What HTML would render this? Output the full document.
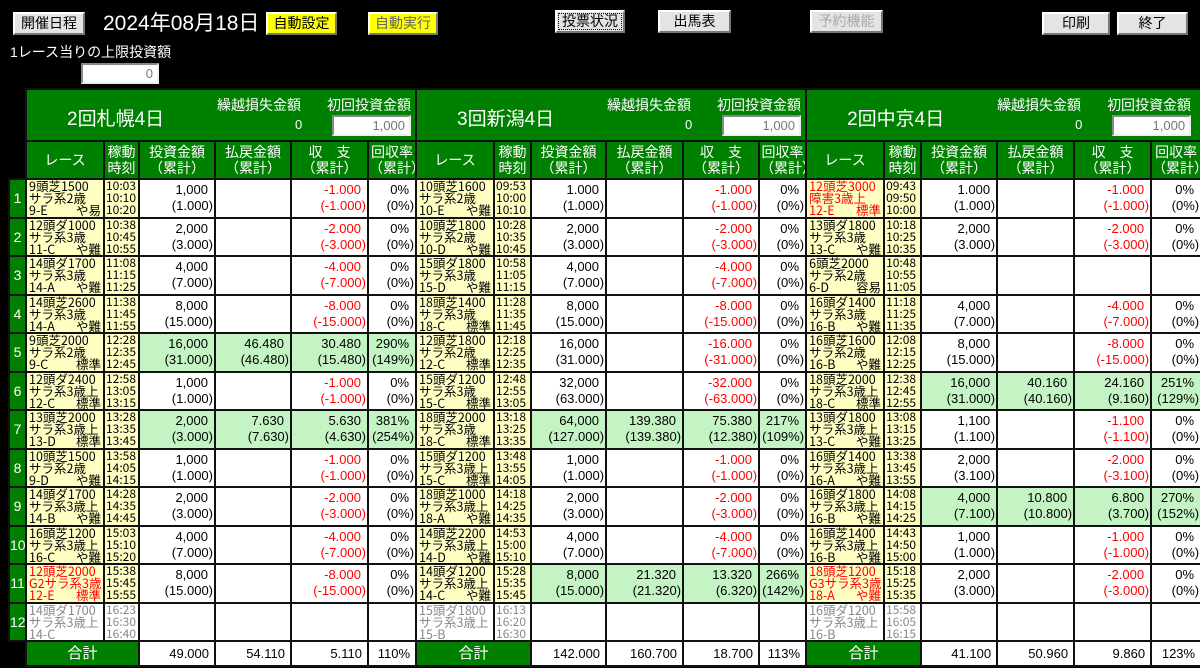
<!DOCTYPE html>
<html><head><meta charset="utf-8">
<style>
*{box-sizing:border-box}
body{margin:0;background:#000;width:1200px;height:668px;overflow:hidden;position:relative;font-family:"Liberation Sans","Noto Sans CJK JP",sans-serif;color:#000}
.btn{position:absolute;height:23px;background:#e4e4e4;border:2px solid;border-color:#fff #777 #777 #fff;font-size:14px;text-align:center;line-height:19px;color:#000}
.yel{background:#ffff00}
.inp{position:absolute;background:#fff;border:2px solid;border-color:#888 #eee #eee #888;text-align:right;font-size:13px;color:#777;padding-right:4px;line-height:17px}
#date{position:absolute;left:103px;top:10px;color:#fff;font-size:21px;line-height:28px}
#lim{position:absolute;left:10px;top:43px;color:#fff;font-size:14px;line-height:18px}
table{position:absolute;left:8px;top:88px;border-collapse:collapse;table-layout:fixed;width:1192px}
td{padding:0;border:2px solid #111;overflow:hidden;white-space:nowrap}
.hd td{background:#008000;color:#fff;font-size:14px;text-align:center;line-height:16px;height:38px}
.ven td.vc{background:#008000;height:52px;position:relative;border-bottom:2px solid #111}
.ven td.bl,.tot td.bl,.hd td.bl{background:#000;border:none}
.ttl{position:absolute;left:40px;top:14px;color:#fff;font-size:19px}
.kl{position:absolute;left:190px;top:5px;color:#fff;font-size:14px}
.k0{position:absolute;left:268px;top:27px;color:#fff;font-size:13px}
.sl{position:absolute;left:300px;top:5px;color:#fff;font-size:14px}
.ven .inp{left:305px;top:25px;width:79px;height:21px}
tr.d td{height:38.4px}
.no{background:#008000;color:#fff;text-align:center;font-size:14px;line-height:14px}
.n,.t{background:#ffffc4;vertical-align:middle;padding-left:2px}
.n div,.t div{font-family:"Noto Sans CJK JP",sans-serif;font-size:12.5px;line-height:12.2px;height:36.5px;overflow:hidden}
.n s{float:right;text-decoration:none;padding-right:2px}
.t{padding-left:1px}
.t div{font-size:12px}
.v{background:#fff;text-align:right;font-size:13px;line-height:16px;vertical-align:middle}
.v span{display:block}
.v span:first-child{padding-right:6px}
.v span:last-child{padding-right:1px}
.r{color:#f00}
.x .n,.x .t{background:#fff;color:#888}
.tot td{height:25px;line-height:18px}
.tot .sum{background:#008000;color:#fff;text-align:center;font-size:15px}
.tot .v{padding-right:5px}
</style></head><body>
<div class="btn" style="left:13px;top:12px;width:72px">開催日程</div>
<div id="date">2024年08月18日</div>
<div class="btn yel" style="left:266px;top:12px;width:71px">自動設定</div>
<div class="btn yel" style="left:368px;top:12px;width:70px;color:#666">自動実行</div>
<div class="btn" style="left:555px;top:10px;width:70px;outline:1px dotted #000;outline-offset:-4px">投票状況</div>
<div class="btn" style="left:658px;top:10px;width:73px">出馬表</div>
<div class="btn" style="left:810px;top:10px;width:73px;color:#aaa">予約機能</div>
<div class="btn" style="left:1042px;top:12px;width:68px">印刷</div>
<div class="btn" style="left:1117px;top:12px;width:71px">終了</div>
<div id="lim">1レース当りの上限投資額</div>
<div class="inp" style="left:81px;top:63px;width:78px;height:21px">0</div>

<table>
<colgroup><col style="width:17px">
<col style="width:78px"><col style="width:35px"><col style="width:76px"><col style="width:76px"><col style="width:77px"><col style="width:48px">
<col style="width:78px"><col style="width:37px"><col style="width:75px"><col style="width:77px"><col style="width:76px"><col style="width:47px">
<col style="width:78px"><col style="width:37px"><col style="width:76px"><col style="width:77px"><col style="width:77px"><col style="width:50px">
</colgroup>
<tr class="ven"><td class="bl"></td>
<td class="vc" colspan="6"><div class="ttl">2回札幌4日</div><div class="kl">繰越損失金額</div><div class="k0">0</div><div class="sl">初回投資金額</div><div class="inp">1,000</div></td>
<td class="vc" colspan="6"><div class="ttl">3回新潟4日</div><div class="kl">繰越損失金額</div><div class="k0">0</div><div class="sl">初回投資金額</div><div class="inp">1,000</div></td>
<td class="vc" colspan="6"><div class="ttl">2回中京4日</div><div class="kl">繰越損失金額</div><div class="k0">0</div><div class="sl">初回投資金額</div><div class="inp">1,000</div></td>
</tr>
<tr class="hd"><td class="bl"></td>
<td>レース</td><td>稼動<br>時刻</td><td>投資金額<br>（累計）</td><td>払戻金額<br>（累計）</td><td>収　支<br>（累計）</td><td>回収率<br>（累計）</td>
<td>レース</td><td>稼動<br>時刻</td><td>投資金額<br>（累計）</td><td>払戻金額<br>（累計）</td><td>収　支<br>（累計）</td><td>回収率<br>（累計）</td>
<td>レース</td><td>稼動<br>時刻</td><td>投資金額<br>（累計）</td><td>払戻金額<br>（累計）</td><td>収　支<br>（累計）</td><td>回収率<br>（累計）</td>
</tr>

<tr class="d"><td class="no">1</td>
<td class="n"><div>9頭芝1500<br>サラ系2歳<br>9-E<s>や易</s></div></td><td class="t"><div>10:03<br>10:10<br>10:20</div></td><td class="v"><span>1,000</span><span>(1.000)</span></td><td class="v"></td><td class="v r"><span>-1.000</span><span>(-1.000)</span></td><td class="v"><span>0%</span><span>(0%)</span></td>
<td class="n"><div>10頭芝1600<br>サラ系2歳<br>10-E<s>や難</s></div></td><td class="t"><div>09:53<br>10:00<br>10:10</div></td><td class="v"><span>1.000</span><span>(1.000)</span></td><td class="v"></td><td class="v r"><span>-1.000</span><span>(-1.000)</span></td><td class="v"><span>0%</span><span>(0%)</span></td>
<td class="n r"><div>12頭芝3000<br>障害3歳上<br>12-E<s>標準</s></div></td><td class="t"><div>09:43<br>09:50<br>10:00</div></td><td class="v"><span>1.000</span><span>(1.000)</span></td><td class="v"></td><td class="v r"><span>-1.000</span><span>(-1.000)</span></td><td class="v"><span>0%</span><span>(0%)</span></td>
</tr>
<tr class="d"><td class="no">2</td>
<td class="n"><div>12頭ダ1000<br>サラ系3歳<br>11-C<s>や難</s></div></td><td class="t"><div>10:38<br>10:45<br>10:55</div></td><td class="v"><span>2,000</span><span>(3.000)</span></td><td class="v"></td><td class="v r"><span>-2.000</span><span>(-3.000)</span></td><td class="v"><span>0%</span><span>(0%)</span></td>
<td class="n"><div>10頭芝1800<br>サラ系2歳<br>10-D<s>や難</s></div></td><td class="t"><div>10:28<br>10:35<br>10:45</div></td><td class="v"><span>2,000</span><span>(3.000)</span></td><td class="v"></td><td class="v r"><span>-2.000</span><span>(-3.000)</span></td><td class="v"><span>0%</span><span>(0%)</span></td>
<td class="n"><div>13頭ダ1800<br>サラ系3歳<br>13-C<s>や難</s></div></td><td class="t"><div>10:18<br>10:25<br>10:35</div></td><td class="v"><span>2,000</span><span>(3.000)</span></td><td class="v"></td><td class="v r"><span>-2.000</span><span>(-3.000)</span></td><td class="v"><span>0%</span><span>(0%)</span></td>
</tr>
<tr class="d"><td class="no">3</td>
<td class="n"><div>14頭ダ1700<br>サラ系3歳<br>14-A<s>や難</s></div></td><td class="t"><div>11:08<br>11:15<br>11:25</div></td><td class="v"><span>4,000</span><span>(7.000)</span></td><td class="v"></td><td class="v r"><span>-4.000</span><span>(-7.000)</span></td><td class="v"><span>0%</span><span>(0%)</span></td>
<td class="n"><div>15頭ダ1800<br>サラ系3歳<br>15-D<s>や難</s></div></td><td class="t"><div>10:58<br>11:05<br>11:15</div></td><td class="v"><span>4,000</span><span>(7.000)</span></td><td class="v"></td><td class="v r"><span>-4.000</span><span>(-7.000)</span></td><td class="v"><span>0%</span><span>(0%)</span></td>
<td class="n"><div>6頭芝2000<br>サラ系2歳<br>6-D<s>容易</s></div></td><td class="t"><div>10:48<br>10:55<br>11:05</div></td><td class="v"></td><td class="v"></td><td class="v"></td><td class="v"></td>
</tr>
<tr class="d"><td class="no">4</td>
<td class="n"><div>14頭芝2600<br>サラ系3歳<br>14-A<s>や難</s></div></td><td class="t"><div>11:38<br>11:45<br>11:55</div></td><td class="v"><span>8,000</span><span>(15.000)</span></td><td class="v"></td><td class="v r"><span>-8.000</span><span>(-15.000)</span></td><td class="v"><span>0%</span><span>(0%)</span></td>
<td class="n"><div>18頭芝1400<br>サラ系3歳<br>18-C<s>標準</s></div></td><td class="t"><div>11:28<br>11:35<br>11:45</div></td><td class="v"><span>8,000</span><span>(15.000)</span></td><td class="v"></td><td class="v r"><span>-8.000</span><span>(-15.000)</span></td><td class="v"><span>0%</span><span>(0%)</span></td>
<td class="n"><div>16頭ダ1400<br>サラ系3歳<br>16-B<s>や難</s></div></td><td class="t"><div>11:18<br>11:25<br>11:35</div></td><td class="v"><span>4,000</span><span>(7.000)</span></td><td class="v"></td><td class="v r"><span>-4.000</span><span>(-7.000)</span></td><td class="v"><span>0%</span><span>(0%)</span></td>
</tr>
<tr class="d"><td class="no">5</td>
<td class="n"><div>9頭芝2000<br>サラ系2歳<br>9-C<s>標準</s></div></td><td class="t"><div>12:28<br>12:35<br>12:45</div></td><td class="v" style="background:#c4f4c4"><span>16,000</span><span>(31.000)</span></td><td class="v" style="background:#c4f4c4"><span>46.480</span><span>(46.480)</span></td><td class="v" style="background:#c4f4c4"><span>30.480</span><span>(15.480)</span></td><td class="v" style="background:#c4f4c4"><span>290%</span><span>(149%)</span></td>
<td class="n"><div>12頭芝1800<br>サラ系2歳<br>12-C<s>標準</s></div></td><td class="t"><div>12:18<br>12:25<br>12:35</div></td><td class="v"><span>16,000</span><span>(31.000)</span></td><td class="v"></td><td class="v r"><span>-16.000</span><span>(-31.000)</span></td><td class="v"><span>0%</span><span>(0%)</span></td>
<td class="n"><div>16頭芝1600<br>サラ系2歳<br>16-B<s>や難</s></div></td><td class="t"><div>12:08<br>12:15<br>12:25</div></td><td class="v"><span>8,000</span><span>(15.000)</span></td><td class="v"></td><td class="v r"><span>-8.000</span><span>(-15.000)</span></td><td class="v"><span>0%</span><span>(0%)</span></td>
</tr>
<tr class="d"><td class="no">6</td>
<td class="n"><div>12頭ダ2400<br>サラ系3歳上<br>12-C<s>標準</s></div></td><td class="t"><div>12:58<br>13:05<br>13:15</div></td><td class="v"><span>1,000</span><span>(1.000)</span></td><td class="v"></td><td class="v r"><span>-1.000</span><span>(-1.000)</span></td><td class="v"><span>0%</span><span>(0%)</span></td>
<td class="n"><div>15頭ダ1200<br>サラ系3歳<br>15-C<s>標準</s></div></td><td class="t"><div>12:48<br>12:55<br>13:05</div></td><td class="v"><span>32,000</span><span>(63.000)</span></td><td class="v"></td><td class="v r"><span>-32.000</span><span>(-63.000)</span></td><td class="v"><span>0%</span><span>(0%)</span></td>
<td class="n"><div>18頭芝2000<br>サラ系3歳上<br>18-C<s>標準</s></div></td><td class="t"><div>12:38<br>12:45<br>12:55</div></td><td class="v" style="background:#c4f4c4"><span>16,000</span><span>(31.000)</span></td><td class="v" style="background:#c4f4c4"><span>40.160</span><span>(40.160)</span></td><td class="v" style="background:#c4f4c4"><span>24.160</span><span>(9.160)</span></td><td class="v" style="background:#c4f4c4"><span>251%</span><span>(129%)</span></td>
</tr>
<tr class="d"><td class="no">7</td>
<td class="n"><div>13頭芝2000<br>サラ系3歳上<br>13-D<s>標準</s></div></td><td class="t"><div>13:28<br>13:35<br>13:45</div></td><td class="v" style="background:#c4f4c4"><span>2,000</span><span>(3.000)</span></td><td class="v" style="background:#c4f4c4"><span>7.630</span><span>(7.630)</span></td><td class="v" style="background:#c4f4c4"><span>5.630</span><span>(4.630)</span></td><td class="v" style="background:#c4f4c4"><span>381%</span><span>(254%)</span></td>
<td class="n"><div>18頭芝2000<br>サラ系3歳<br>18-C<s>標準</s></div></td><td class="t"><div>13:18<br>13:25<br>13:35</div></td><td class="v" style="background:#c4f4c4"><span>64,000</span><span>(127.000)</span></td><td class="v" style="background:#c4f4c4"><span>139.380</span><span>(139.380)</span></td><td class="v" style="background:#c4f4c4"><span>75.380</span><span>(12.380)</span></td><td class="v" style="background:#c4f4c4"><span>217%</span><span>(109%)</span></td>
<td class="n"><div>13頭ダ1800<br>サラ系3歳上<br>13-C<s>や難</s></div></td><td class="t"><div>13:08<br>13:15<br>13:25</div></td><td class="v"><span>1,100</span><span>(1.100)</span></td><td class="v"></td><td class="v r"><span>-1.100</span><span>(-1.100)</span></td><td class="v"><span>0%</span><span>(0%)</span></td>
</tr>
<tr class="d"><td class="no">8</td>
<td class="n"><div>10頭芝1500<br>サラ系2歳<br>9-D<s>や難</s></div></td><td class="t"><div>13:58<br>14:05<br>14:15</div></td><td class="v"><span>1,000</span><span>(1.000)</span></td><td class="v"></td><td class="v r"><span>-1.000</span><span>(-1.000)</span></td><td class="v"><span>0%</span><span>(0%)</span></td>
<td class="n"><div>15頭ダ1200<br>サラ系3歳上<br>15-C<s>標準</s></div></td><td class="t"><div>13:48<br>13:55<br>14:05</div></td><td class="v"><span>1,000</span><span>(1.000)</span></td><td class="v"></td><td class="v r"><span>-1.000</span><span>(-1.000)</span></td><td class="v"><span>0%</span><span>(0%)</span></td>
<td class="n"><div>16頭ダ1400<br>サラ系3歳上<br>16-A<s>や難</s></div></td><td class="t"><div>13:38<br>13:45<br>13:55</div></td><td class="v"><span>2,000</span><span>(3.100)</span></td><td class="v"></td><td class="v r"><span>-2.000</span><span>(-3.100)</span></td><td class="v"><span>0%</span><span>(0%)</span></td>
</tr>
<tr class="d"><td class="no">9</td>
<td class="n"><div>14頭ダ1700<br>サラ系3歳上<br>14-B<s>や難</s></div></td><td class="t"><div>14:28<br>14:35<br>14:45</div></td><td class="v"><span>2,000</span><span>(3.000)</span></td><td class="v"></td><td class="v r"><span>-2.000</span><span>(-3.000)</span></td><td class="v"><span>0%</span><span>(0%)</span></td>
<td class="n"><div>18頭芝1000<br>サラ系3歳上<br>18-A<s>や難</s></div></td><td class="t"><div>14:18<br>14:25<br>14:35</div></td><td class="v"><span>2,000</span><span>(3.000)</span></td><td class="v"></td><td class="v r"><span>-2.000</span><span>(-3.000)</span></td><td class="v"><span>0%</span><span>(0%)</span></td>
<td class="n"><div>16頭ダ1800<br>サラ系3歳上<br>16-B<s>や難</s></div></td><td class="t"><div>14:08<br>14:15<br>14:25</div></td><td class="v" style="background:#c4f4c4"><span>4,000</span><span>(7.100)</span></td><td class="v" style="background:#c4f4c4"><span>10.800</span><span>(10.800)</span></td><td class="v" style="background:#c4f4c4"><span>6.800</span><span>(3.700)</span></td><td class="v" style="background:#c4f4c4"><span>270%</span><span>(152%)</span></td>
</tr>
<tr class="d"><td class="no">10</td>
<td class="n"><div>16頭芝1200<br>サラ系3歳上<br>16-C<s>や難</s></div></td><td class="t"><div>15:03<br>15:10<br>15:20</div></td><td class="v"><span>4,000</span><span>(7.000)</span></td><td class="v"></td><td class="v r"><span>-4.000</span><span>(-7.000)</span></td><td class="v"><span>0%</span><span>(0%)</span></td>
<td class="n"><div>14頭芝2200<br>サラ系3歳上<br>14-D<s>や難</s></div></td><td class="t"><div>14:53<br>15:00<br>15:10</div></td><td class="v"><span>4,000</span><span>(7.000)</span></td><td class="v"></td><td class="v r"><span>-4.000</span><span>(-7.000)</span></td><td class="v"><span>0%</span><span>(0%)</span></td>
<td class="n"><div>16頭芝1400<br>サラ系3歳上<br>16-B<s>や難</s></div></td><td class="t"><div>14:43<br>14:50<br>15:00</div></td><td class="v"><span>1,000</span><span>(1.000)</span></td><td class="v"></td><td class="v r"><span>-1.000</span><span>(-1.000)</span></td><td class="v"><span>0%</span><span>(0%)</span></td>
</tr>
<tr class="d"><td class="no">11</td>
<td class="n r"><div>12頭芝2000<br>G2サラ系3歳<br>12-E<s>標準</s></div></td><td class="t"><div>15:38<br>15:45<br>15:55</div></td><td class="v"><span>8,000</span><span>(15.000)</span></td><td class="v"></td><td class="v r"><span>-8.000</span><span>(-15.000)</span></td><td class="v"><span>0%</span><span>(0%)</span></td>
<td class="n"><div>14頭ダ1200<br>サラ系3歳上<br>14-C<s>や難</s></div></td><td class="t"><div>15:28<br>15:35<br>15:45</div></td><td class="v" style="background:#c4f4c4"><span>8,000</span><span>(15.000)</span></td><td class="v" style="background:#c4f4c4"><span>21.320</span><span>(21.320)</span></td><td class="v" style="background:#c4f4c4"><span>13.320</span><span>(6.320)</span></td><td class="v" style="background:#c4f4c4"><span>266%</span><span>(142%)</span></td>
<td class="n r"><div>18頭芝1200<br>G3サラ系3歳<br>18-A<s>や難</s></div></td><td class="t"><div>15:18<br>15:25<br>15:35</div></td><td class="v"><span>2,000</span><span>(3.000)</span></td><td class="v"></td><td class="v r"><span>-2.000</span><span>(-3.000)</span></td><td class="v"><span>0%</span><span>(0%)</span></td>
</tr>
<tr class="d x"><td class="no">12</td>
<td class="n"><div>14頭ダ1700<br>サラ系3歳上<br>14-C</div></td><td class="t"><div>16:23<br>16:30<br>16:40</div></td><td class="v"></td><td class="v"></td><td class="v"></td><td class="v"></td>
<td class="n"><div>15頭ダ1800<br>サラ系3歳上<br>15-B</div></td><td class="t"><div>16:13<br>16:20<br>16:30</div></td><td class="v"></td><td class="v"></td><td class="v"></td><td class="v"></td>
<td class="n"><div>16頭ダ1200<br>サラ系3歳上<br>16-B</div></td><td class="t"><div>15:58<br>16:05<br>16:15</div></td><td class="v"></td><td class="v"></td><td class="v"></td><td class="v"></td>
</tr>
<tr class="tot"><td class="bl"></td>
<td class="sum" colspan="2">合計</td><td class="v">49.000</td><td class="v">54.110</td><td class="v">5.110</td><td class="v">110%</td>
<td class="sum" colspan="2">合計</td><td class="v">142.000</td><td class="v">160.700</td><td class="v">18.700</td><td class="v">113%</td>
<td class="sum" colspan="2">合計</td><td class="v">41.100</td><td class="v">50.960</td><td class="v">9.860</td><td class="v">123%</td>
</tr>
</table>
</body></html>
